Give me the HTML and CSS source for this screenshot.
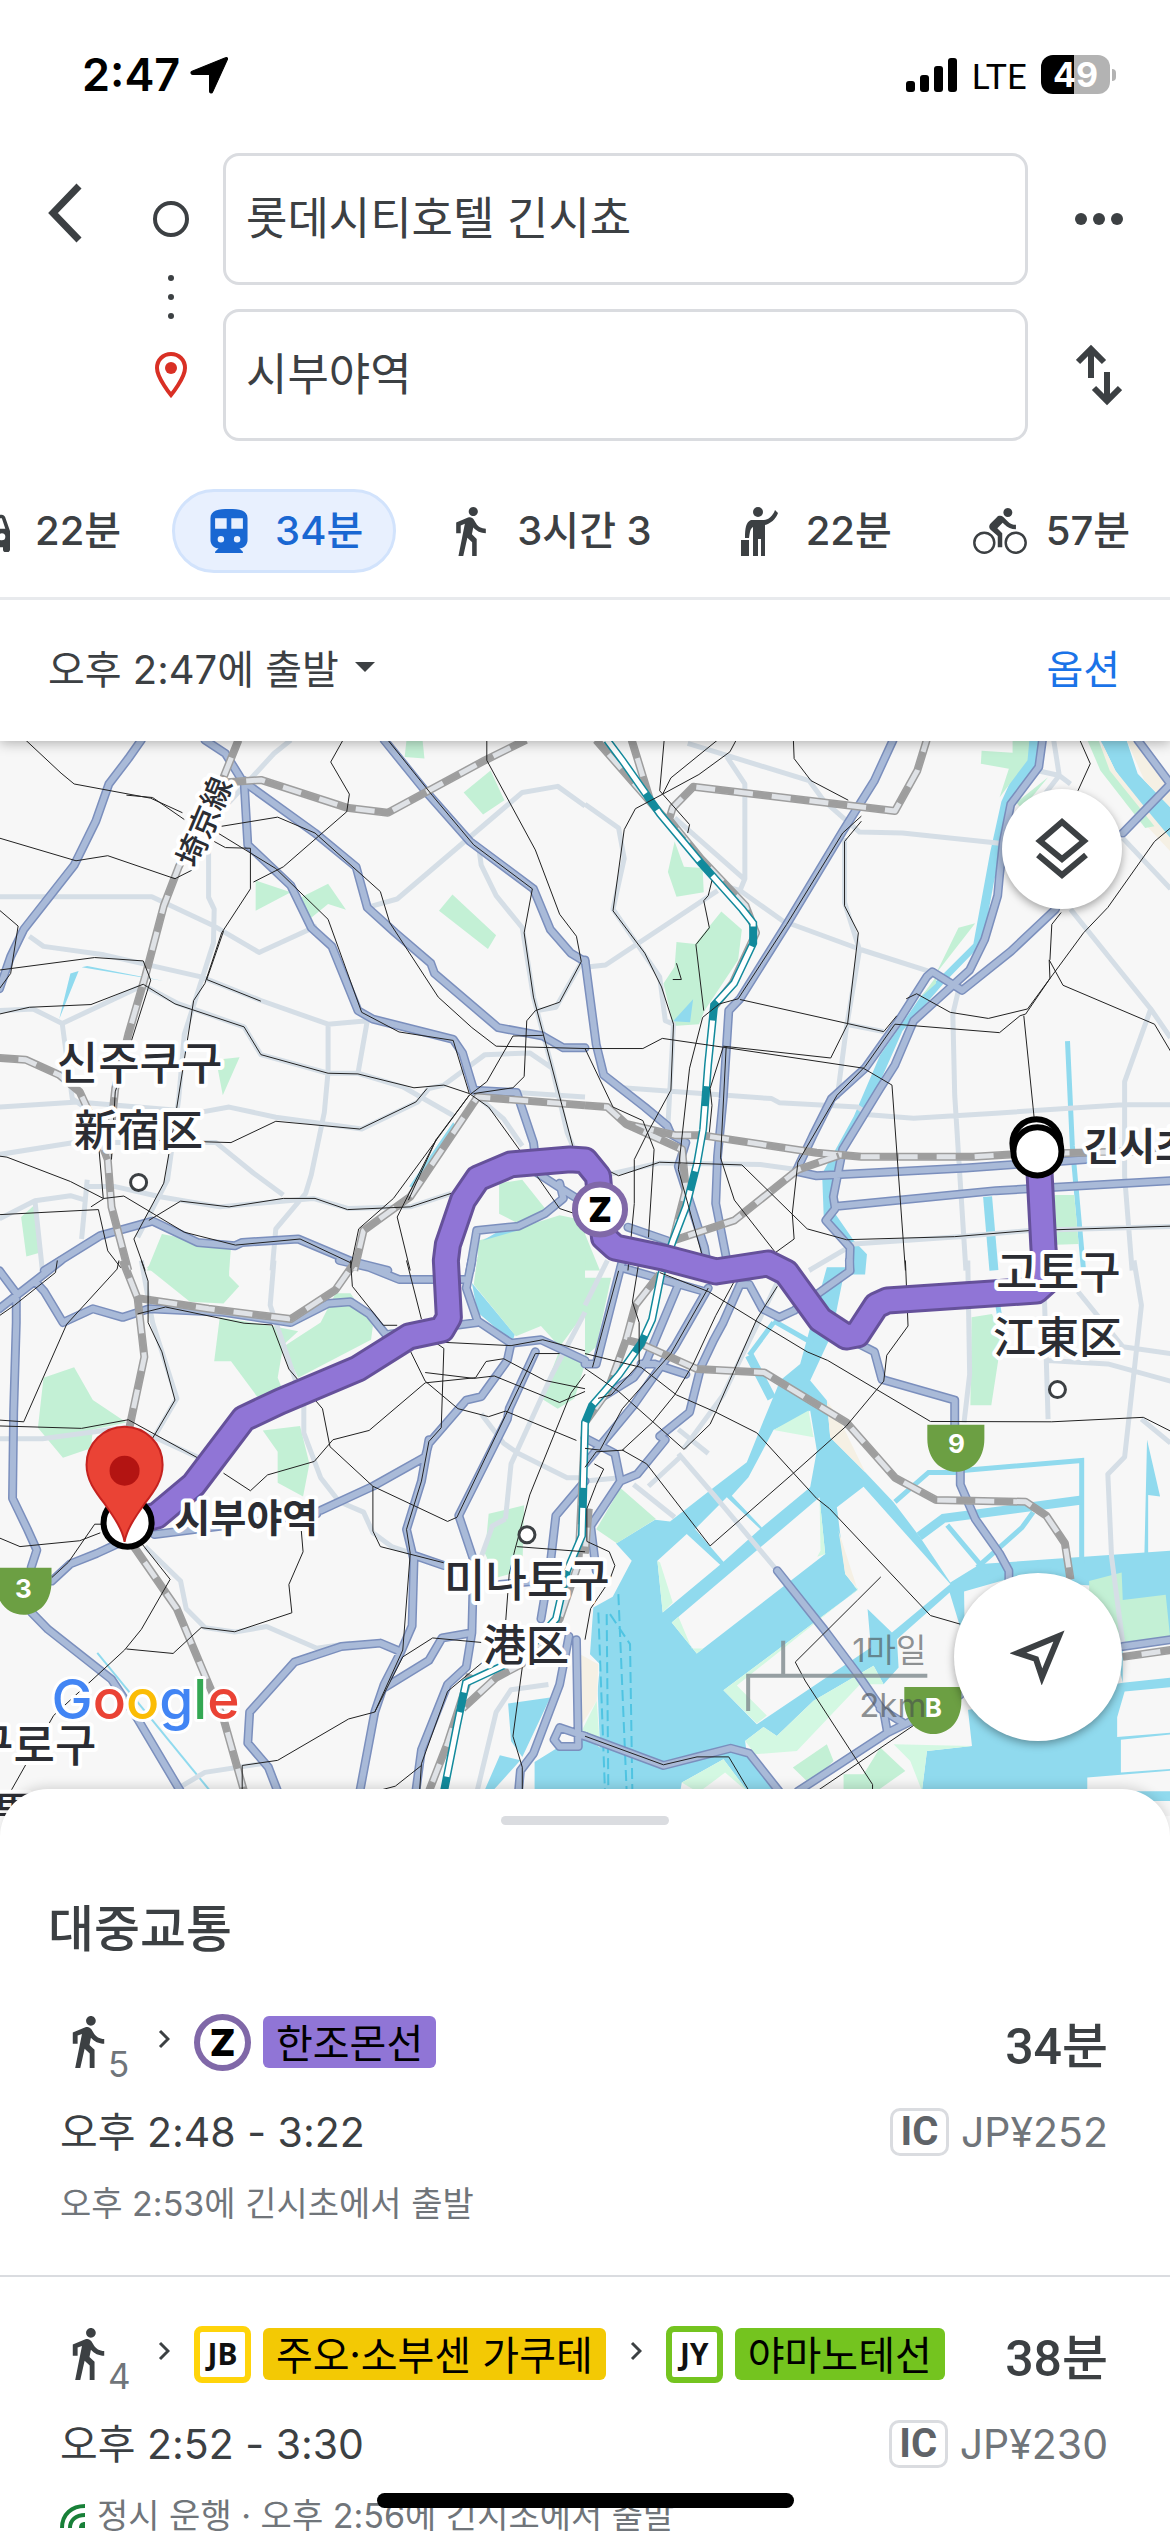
FILE: index.html
```html
<!DOCTYPE html>
<html lang="ko">
<head>
<meta charset="utf-8">
<meta name="viewport" content="width=device-width, initial-scale=1">
<title>대중교통 경로</title>
<link rel="stylesheet" href="styles.css">
</head>
<body>
<svg class="sprite" aria-hidden="true">
  <symbol id="walk" viewBox="6 1.5 13 21.5"><path d="M13.5 5.5c1.1 0 2-.9 2-2s-.9-2-2-2-2 .9-2 2 .9 2 2 2zM9.8 8.9L7 23h2.1l1.8-8 2.1 2v6h2v-7.5l-2.1-2 .6-3C14.8 12 16.8 13 19 13v-2c-1.9 0-3.5-1-4.3-2.4l-1-1.6c-.4-.6-1-1-1.7-1-.3 0-.5.1-.8.1L6 8.3V13h2V9.6l1.8-.7"/></symbol>
  <symbol id="chevron" viewBox="0 0 12 20"><path d="M2 2l8 8-8 8" fill="none" stroke="#3c4043" stroke-width="3"/></symbol>
</svg>
<div class="screen">
  <header class="top">
    <div class="status">
      <div class="status-left">
        <span class="clock">2:47</span>
        <svg width="38" height="38" viewBox="0 0 36 36"><path d="M34.500 1.500c1 0 1.300 1 .9 1.900L21.500 34c-.8 1.800-3 1.300-3-.6V17.500H2.600C.7 17.500.2 15.300 2 14.500L33 1.900z" stroke="#000" stroke-linejoin="round"/></svg>
      </div>
      <div class="status-right">
        <svg width="51" height="36" viewBox="0 0 51 36"><rect y="24" width="9" height="11" rx="3"/><rect x="14" y="18" width="9" height="17" rx="3"/><rect x="28" y="9" width="9" height="26" rx="3"/><rect x="42" y="1" width="9" height="34" rx="3"/></svg>
        <span class="carrier">LTE</span>
        <span class="battery">49</span>
      </div>
    </div>

    <form class="search">
      <button type="button" class="icon-btn back" aria-label="뒤로"><svg width="36" height="60" viewBox="0 0 36 60"><path d="M31 3L5 30l26 27" fill="none" stroke="#3c4043" stroke-width="7"/></svg></button>
      <div class="stops">
        <svg width="40" height="40" viewBox="0 0 40 40"><circle cx="20" cy="20" r="16" fill="none" stroke="#3c4043" stroke-width="4"/></svg>
        <svg width="8" height="46" viewBox="0 0 8 46" fill="#3c4043"><circle cx="4" cy="4" r="3"/><circle cx="4" cy="23" r="3"/><circle cx="4" cy="42" r="3"/></svg>
        <svg width="32" height="46" viewBox="0 0 32 46"><path d="M16 2C8 2 2 8 2 16c0 10 14 27 14 27s14-17 14-27C30 8 24 2 16 2z" fill="none" stroke="#d93025" stroke-width="4"/><circle cx="16" cy="16" r="6" fill="#d93025"/></svg>
      </div>
      <div class="fields">
        <input type="text" aria-label="출발지" value="롯데시티호텔 긴시쵸">
        <input type="text" aria-label="목적지" value="시부야역">
      </div>
      <div class="side">
        <button type="button" class="icon-btn" aria-label="더보기"><svg width="50" height="14" viewBox="0 0 50 14" fill="#3c4043"><circle cx="7" cy="7" r="6"/><circle cx="25" cy="7" r="6"/><circle cx="43" cy="7" r="6"/></svg></button>
        <button type="button" class="icon-btn" aria-label="출발지와 목적지 바꾸기"><svg width="46" height="62" viewBox="0 0 46 62" fill="none" stroke="#3c4043" stroke-width="6"><path d="M15 34V6M2 18L15 5l13 13M31 28v28M18 44l13 13 13-13"/></svg></button>
      </div>
    </form>

    <nav class="modes" aria-label="이동 수단">
      <button type="button" class="mode"><span class="mode-icon"><svg width="42" height="42" viewBox="3 4 18 16"><path d="M18.900 6c-.2-.6-.8-1-1.400-1h-11c-.7 0-1.200.4-1.400 1L3 12v8c0 .6.500 1 1 1h1c.6 0 1-.5 1-1v-1h12v1c0 .6.500 1 1 1h1c.6 0 1-.5 1-1v-8zM6.500 16a1.500 1.500 0 1 1 0-3 1.500 1.500 0 0 1 0 3zm11 0a1.500 1.500 0 1 1 0-3 1.500 1.500 0 0 1 0 3zM5 11l1.500-4.500h11L19 11z"/></svg></span>22분</button>
      <button type="button" class="mode selected" aria-pressed="true"><span class="mode-icon"><svg width="38" height="44" viewBox="4 2 16 19"><path d="M12 2c-4.400 0-8 .5-8 4v9.500C4 17.400 5.600 19 7.500 19L6 20.500v.5h12v-.5L16.500 19c1.900 0 3.500-1.600 3.500-3.500V6c0-3.500-3.600-4-8-4zM8.500 16.500a1.400 1.400 0 1 1 0-2.800 1.400 1.400 0 0 1 0 2.800zM11 10.500H6V6h5v4.500zm4.500 6a1.400 1.400 0 1 1 0-2.800 1.400 1.400 0 0 1 0 2.800zm2.500-6h-5V6h5v4.500z"/></svg></span>34분</button>
      <button type="button" class="mode"><span class="mode-icon"><svg width="30" height="49"><use href="#walk"/></svg></span>3시간 3</button>
      <button type="button" class="mode"><span class="mode-icon"><svg width="37" height="49" viewBox="0 0 37 49"><circle cx="17" cy="5" r="5"/><path d="M10 13h13c4 0 9-4 11-10l3 3c-2 6-8 11-13 12v31h-4V32h-3v17h-5V20c-3 2-3 5-4 11H4c0-10 1-16 6-18zM0 33h8v16H0z"/></svg></span>22분</button>
      <button type="button" class="mode"><span class="mode-icon"><svg width="54" height="46" viewBox="0 1.5 24 20.5"><path d="M15.500 5.500c1.100 0 2-.9 2-2s-.9-2-2-2-2 .9-2 2 .9 2 2 2zM5 12c-2.800 0-5 2.200-5 5s2.200 5 5 5 5-2.200 5-5-2.200-5-5-5zm0 8.900A3.900 3.900 0 1 1 5 13.100a3.900 3.900 0 0 1 0 7.800zm5.800-10.400l2.400-2.400.8.8c1.300 1.300 3 2.100 5.100 2.100V9c-1.500 0-2.700-.6-3.600-1.500l-1.900-1.900c-.5-.4-1-.6-1.600-.6s-1.100.2-1.400.6L7.800 8.400c-.4.4-.6.9-.6 1.400 0 .6.200 1.100.6 1.400L11 14v5h2v-6.200zM19 12c-2.800 0-5 2.200-5 5s2.200 5 5 5 5-2.200 5-5-2.200-5-5-5zm0 8.900a3.900 3.900 0 1 1 0-7.800 3.900 3.900 0 0 1 0 7.800z"/></svg></span>57분</button>
    </nav>

    <div class="depart">
      <button type="button" class="depart-time">오후 2:47에 출발<svg width="20" height="10" viewBox="0 0 20 10"><path d="M0 0h20L10 10z" fill="#3c4043"/></svg></button>
      <button type="button" class="options">옵션</button>
    </div>
  </header>

  <main class="map">
    <svg class="map-canvas" viewBox="0 0 1170 1074" preserveAspectRatio="xMidYMin slice" role="img" aria-label="지도">
      <defs>
        <g id="light">
          <g transform="translate(0 -1) scale(.3731 .338)"><path d="M780 0L735 40L610 190M560 310V465L575 500L573 600L495 870L480 1060L450 1300L370 1470M0 463H408L575 550L695 628L850 550M985 495L1065 470L1400 155L1495 137L1568 195M80 580L118 610L280 635L540 700L700 770L880 840L985 830L960 985M880 840V980L870 1100L835 1285L820 1340L740 1445L730 1568M0 800L90 795L168 838L385 725L480 780L655 848L700 930L880 985H960L1080 1025L1215 1110M168 838L195 1060L240 1095M0 1085L210 1070L540 1100L615 1085L740 1115L970 1150L1120 1070L1150 1030L1190 1020L1300 930L1420 925L1480 970M0 1225L200 1190H580L680 1280L760 1345M230 1320H310L430 1350L590 1380L840 1355L935 1385L1100 1380L1210 1340M0 1415L95 1362L190 1347L230 1360M95 1362L115 1568M235 1300L220 1475M1285 330L1290 370L1330 460L1400 555L1430 760L1480 970L1520 1160L1535 1200M1440 800L1490 790L1560 655M1270 1045L1350 1120L1400 1200M1385 1042L1568 1055"/></g>
          <g transform="translate(585 -1) scale(.3731 .338)"><path d="M275 10L600 120L640 180L735 272L850 275L1110 305M380 50L428 130V410L415 445L385 435M240 230L425 410M0 190L90 260L105 350L75 500L200 700L215 830L237 840L222 1140M415 445L530 535L740 620L920 683M0 672L55 665L355 445M695 290V480L735 620L700 850L675 1060M700 840L800 862M1000 740L985 810L990 1050L1020 1568M100 1028L500 1060L520 1072L730 1085L760 1108L880 1118L1100 1103L1440 1078H1568M1300 500L1515 795L1445 1010V1290L1465 1568M1210 90L1270 105L1300 130M1255 0L1270 105L1210 190M1440 290L1568 440M1515 795L1568 880M60 1285L200 1250L470 1255L600 1275M600 1568L720 1490L1000 1468L1190 1450L1568 1438"/></g>
          <g transform="translate(0 519) scale(.3731 .3444)"><path d="M0 517H115L335 485L430 520L540 575M380 0L410 180L475 400L410 520M735 0L725 130L815 420V500L860 630L910 700L975 730L1000 790L1050 830L1190 880M390 830L485 930L500 1010L550 1065L630 1078L715 1062L850 1125L940 1110M1568 150L1480 330L1370 590L1355 750M1290 445L1350 530L1390 560L1520 630H1568M1355 750L1320 770L1290 860M1470 1230L1370 1245L1330 1310L1280 1535M480 1530L550 1485L700 1460"/></g>
          <g transform="translate(585 519) scale(.3731 .3444)"><path d="M515 900L345 680L250 560M250 490L330 560M0 640L95 630M130 650L240 745M170 655L260 565M60 0L0 130M530 30L370 390L265 545M1025 0L1030 330L1015 470M1230 100L1240 460M1470 0L1490 130L1445 570L1400 620L1410 860L1440 1110M1320 90L1440 250L1568 270M1240 290L1400 300L1568 350M1490 460L1568 530"/></g>
        </g>
        <g id="highways">
          <g transform="translate(0 -1) scale(.3731 .338)"><path d="M380 0L345 55L293 130L258 240L200 370L65 560L30 640L0 735M550 0L605 40L650 120L845 275L955 375L985 495L1060 570L1155 660L1165 690L1335 850L1455 875L1510 910H1568M655 120L665 310L780 430L835 555L890 610L960 800L1000 825L1215 885L1240 925L1270 1035L1385 1042L1430 1190L1440 1280L1510 1330L1568 1370M1030 0L1140 150L1260 300L1430 440L1475 560L1530 630L1568 655M120 1568L270 1465L410 1422L530 1485L630 1495L650 1485L800 1475L940 1540L1040 1568M1260 1568L1278 1450L1390 1437L1460 1400L1510 1355L1500 1310"/></g>
          <g transform="translate(585 -1) scale(.3731 .338)"><path d="M825 0L775 120L690 270L540 545L415 765L385 800L370 1060L355 1230L350 1370L385 1568M1225 0L1215 80L1140 190L1120 300L1110 400L1105 460L1070 590L1030 680L940 770L880 830L830 960L790 1030L690 1210L665 1350L670 1385L645 1420L710 1500L708 1568M1260 500L1140 625L1010 740L930 685L915 700L840 830L750 970L660 1060L610 1170L565 1275L620 1288L1020 1265L1340 1240M675 1378L1100 1332L1568 1303M0 650L30 900L50 990L160 1085L220 1140L230 1165L270 1190L250 1260L320 1500L330 1568M1480 0L1568 130L1440 275M115 1440L220 1480"/></g>
          <g transform="translate(0 519) scale(.3731 .3444)"><path d="M0 30L45 95V180L38 440L35 690L75 780L100 840L85 890M85 1020L130 1070L300 1215L370 1330L485 1540M0 140L95 60L165 0M95 60L120 90L170 180L250 140L330 165L400 140L600 150L780 180L880 125L940 120L990 155L1035 215L1280 180M910 0L990 20L1070 55H1250M1265 0L1250 80L1280 175L1370 240L1450 230L1568 290M1370 240L1360 290L1290 395L1250 405L1150 530L1140 570L1000 655L860 725M1150 520L1130 640L1090 780L1110 870L1105 1060L1075 1135L1020 1110L915 1120L790 1165L670 1310L665 1400L720 1470L745 1540M1075 1135L1030 1230L1005 1310L965 1540M1435 265L1365 430L1360 460L1230 740L1270 870L1265 1080L1185 1095L1150 1160L1030 1240M1265 1080L1250 1180L1200 1230L1130 1420L1115 1540M1110 855L1190 885M1340 940L1440 930M415 795L850 735M140 930L190 880L260 850L320 820M1568 640L1490 740L1475 880L1450 1040M1525 1090L1500 1230L1430 1430L1395 1480L1390 1540M1545 1100L1550 1410H1500L1485 1390L1500 1355L1568 1380"/></g>
          <g transform="translate(585 519) scale(.3731 .3444)"><path d="M100 0L30 300L0 300M95 20L320 90M250 70L165 290L130 340L40 400M330 80L240 250L130 420L0 590M440 70H415L370 180L345 230L310 310L280 440L200 510L215 520L140 620L95 640L15 770L30 900M0 515L80 560L95 640M440 70L475 140L520 165L560 145L710 30L708 0M150 300H185L270 330M730 240L775 265L795 345L990 405V480M1005 605V650L1045 750L1110 850L1135 900V925M515 900L640 1070L730 1200L800 1310L810 1370L570 1540M1005 1260L885 1330L810 1370M790 1300L850 1340M0 1380L210 1465L300 1440L390 1415L440 1430L520 1540M1440 1120L1568 1100"/></g>
        </g>
        <g id="rails">
          <g transform="translate(0 -1) scale(.3731 .338)"><path d="M640 0L600 110L540 240L480 375L440 490L390 700L345 870L310 1030L290 1240L300 1380L345 1568M610 125L700 118L930 200L1040 215L1300 60L1410 0M0 940L70 945L160 990L215 1040L240 1100L290 1240M1568 1080L1280 1055L1100 1350L975 1450L950 1568"/></g>
          <g transform="translate(585 -1) scale(.3731 .338)"><path d="M30 0L200 215L310 350L430 490L458 570L395 720L345 790M125 0L175 180M310 350L225 235L235 200L290 138L830 210L890 90L915 0M0 1080L60 1085L110 1135L240 1168H310L620 1220L740 1232H1040L1140 1225L1568 1213M110 1135L260 1210L270 1330L235 1480L400 1420L570 1270L680 1228"/></g>
          <g transform="translate(0 519) scale(.3731 .3444)"><path d="M330 0L370 110L388 280L345 500M375 110L560 140L780 170L900 85L955 0M360 830L475 1010L545 1190L600 1330L655 1540M1568 490L1550 880L1500 1040L1400 1170L1330 1210L1240 1300M1260 1200L1200 1400L1150 1540"/></g>
          <g transform="translate(585 519) scale(.3731 .3444)"><path d="M200 40L135 130L110 230L145 240L300 315L480 325L700 470L830 630L940 695L1180 700L1235 740L1285 820L1300 925M110 230L60 380L0 470M1440 1150L1568 1130M10 720L0 850"/></g>
        </g>
        <path id="shinkansen" d="M607 -1L622 19L660 73L701 122L742 168L753 182V202L734 242L714 264L708 323L703 388L697 422L686 465L673 499L661 533L652 578L641 602L619 633L592 664L585 681L582 794L567 829L556 877L522 915L466 941L457 984L444 1050"/>
        <path id="route" d="M128 781L157 774L194 743L244 677L280 660L358 627L409 595L442 588L449 576L446 519L448 503L463 459L478 437L511 423L570 418L585 419L598 435L601 468L604 496L615 506L663 516L716 530L768 522L786 531L820 578L846 595L857 593L876 564L887 559L1036 549L1046 540L1043 506L1038 410"/>
      </defs>

      <rect width="1170" height="1074" class="land"/>
      <g class="water">
        <g transform="translate(0 -1) scale(.3731 .338)"><path d="M190 690l22-7-52 142zM220 672l15-4 205 44zM1097 1320l118-190 10 15-105 180z"/></g>
        <g transform="translate(585 -1) scale(.3731 .338)"><path d="M1190 0h25l-10 80-65 110-20 110-25 120-30 180-105 120-110 140-60 150-90 180-20 70-10 140 50 80 35 40-5 60h-50l15-68-75-80-5-150 85-170 70-180 110-175 140-155 45-270 30-150zM1380 0h70l30 100 88 100v110l-68-90-80-130z"/><path class="canal" d="M1292 890l13 310 30 368"/><path class="canal wide" d="M1078 1350l17 218"/></g>
        <g transform="translate(580 659) scale(.3333)"><path d="M40 620L98 588L155 480L108 428L225 357L270 362L395 265L500 185L550 60L600 -60L660 -110L740 -400H795L755 -200L690 -60L740 0L750 110L855 215L940 305L1020 410L1110 545L1200 490L1770 450V1200H0V1000L50 900L60 790L30 760z"/></g>
        <g transform="translate(0 519) scale(.3731 .3444)"><path d="M1265 65l115 150-5 15-25-15-70-65zM1362 1285l113-17-75 172-30-45zM1433 1540v-85l67-45 68 10v120zM1340 1435l55 15-75 90h-22z"/><path class="thin" d="M262 1138L565 1540"/></g>
        <g transform="translate(585 519) scale(.3731 .3444)"><path class="canal" d="M980 612L1330 580V880M830 700L920 615H1000M1050 890L1170 775L1200 730M970 768L1080 910M505 175L610 240M440 275L505 180M1095 60L1110 160"/><path class="canal wide" d="M895 800L960 748L1330 695M440 275L500 400"/><path d="M1505 520l35 165-32-5v170h-10z"/></g>
      </g>
      <g class="land">
        <g transform="translate(580 659) scale(.3333)"><path d="M580 88l60-28 50-30 20 120-20 110-145 120-90-95 50-55zM345 385l95-95 100 95-110 98-85-98zM232 480l88-80 100 92-172 143zM275 665l443-375 17 170-385 298zM770 320l80-62 260 292-175 145-73-70 10 115-342 230-100-102 402-300-37-48zM495 1020l55-42 40 27 110-105 180-105 30 55 45-50-5-85 158-140 32 105 20 220 15 135-135 15-15 120H590l-90-110zM0 760l50 35 10 245-60-40zM305 1145l125-70 75 100H300z"/></g>
        <g transform="translate(585 519) scale(.3731 .3444)"><path d="M1015 960l115-35 250 20 60 280-420 80zM1440 1120l128-20v110l-128 15zM1445 1250l123-12v132l-143 12v-57zM1435 1390l133-15v100l-133 10zM1345 1500l223-20v60h-223z"/></g>
      </g>
      <g class="beige">
        <g transform="translate(585 -1) scale(.3731 .338)"><path d="M1385 10l35 80 80 110 68 90v40l-118-140-70-120zM1450 0h30l88 130v70l-70-80z"/></g>
        <g transform="translate(580 659) scale(.3333)"><path d="M740 0l40 60 75 155-105-105zM775 390l55 170-35-40zM0 760l55 30-5 110-50 80z"/></g>
      </g>
      <g class="park-light">
        <g transform="translate(580 659) scale(.3333)"><path d="M580 88l105-58 15 80zM232 480l8 5 38 120-30 30zM275 665l20-17 40 95 35 0-20 15zM718 290l3 160-10 18 24-8zM430 868l402-300-12-14 14 10-364 290 60 60 30 30-30 24zM495 1020l55-42 40 27 110-105 180-105 30 55h-70l-190 200-125 10zM940 1030l235 5-135 15-15 120-35-90zM305 1145l125-70 75 100-70-60-80 60zM50 900l10 140-60-40z"/></g>
      </g>
      <g class="park">
        <g transform="translate(0 -1) scale(.3731 .338)"><path d="M1090 0h43l5 55-53-5zM1243 155l72-65 37 88-57 42zM686 415l94 35-94 55zM808 465l72-40 48 77-48-17-50 45zM1213 457l117 120-22 41-131-113zM580 945l63-7-45 112zM58 1410l35-35 17 140-38 12zM435 1460l185 40-5 68H395zM1338 1310l62-10 65 90-75 40-52-30zM1282 1480l218-75 68 15v148h-288z"/></g>
        <g transform="translate(585 -1) scale(.3731 .338)"><path d="M1145 0h45l-5 60-75 110 25-85-75-15 2-38 83 6zM1155 185l85-75-70 95zM240 300l25 75 50 3 3 72-73 13-23-73zM365 507l55 53-10 90-90 150-15 40-68 5-27-125 30-50 5-73 50 6zM1000 555l45-13-105 148zM900 760l40-60v20zM1345 0h30l30 90 120 165-25 5-120-170zM1258 1345h52l12 145-60 2zM0 1460l40 108H0z"/></g>
        <g transform="translate(0 519) scale(.3731 .3444)"><path d="M395 20l35-30h185v55l27 30-42 50-90-5zM590 165l140 25 70 15-40 40-15 95 15 40-70 15-70-103h-45zM860 180l40-85h40l60 95-5 40-195 110-40-90zM118 340l82-30 50 95 90 65-90 20-5 55-75 27-67-87zM705 493l100-13 25 110-17 95-68-40v-90zM1280-10h288v160l-68 100-50-60-67 30-113-150zM1500 260l68 40-28 100-45 30-45-30zM1310 735l95-25-5 190-70 20-30-70z"/></g>
        <g transform="translate(585 519) scale(.3731 .3444)"><path d="M1035 165l55-10 25 75-27 190h-56zM30 780l65-120 95 90-105 70zM0 50h70L30 250 0 280zM1350 930l87-25 3 80 115-15 13 135-128 5-90-40z"/></g>
        <g transform="translate(580 659) scale(.3333)"><path d="M638 1100l102-70 20 50-70 70zM900 1040l75 70-85 60-100 0 0-50 60 0z"/></g>
      </g>
      <g class="water"><path d="M673 280l20-22-3 23zM483 499l17-10h18z"/></g>
      <g class="ferry" transform="translate(580 659) scale(.3333)"><path d="M55 635l20 540M80 640l5 535M115 580l25 595M90 640l60 90 7 445"/></g>

      <use href="#light" class="light"/>
      <use href="#highways" class="highway-edge"/>
      <use href="#highways" class="highway"/>
      <use href="#rails" class="rail-edge"/>
      <use href="#rails" class="rail"/>
      <use href="#rails" class="rail-dash"/>
      <use href="#shinkansen" class="bullet-edge"/>
      <use href="#shinkansen" class="bullet-dash"/>
      <g class="metro">
        <g transform="translate(0 -1) scale(.3731 .338)"><path d="M70 0L165 98L200 130L405 172L490 215M340 163L410 170L495 235M0 290L205 357L290 342L470 410L515 385M595 255L745 228L845 275L1020 448L1045 540L1175 760L1265 850L1330 905L1568 912M585 275L740 380L880 530L970 805L1070 863L1215 888L1258 1045M575 300L605 318L672 320V440L595 570L550 720L520 770L470 1120L440 1310L360 1475L390 1568M680 420L760 375L930 212L937 160L887 65L920 0M0 503L50 550L30 690L0 735M0 680L255 643L385 653L405 710L310 1040L300 1240M0 810L80 790L245 782L385 722L470 780L655 848L700 930L880 985L960 987L1110 1028L1190 1020L1258 1045M600 565L555 708L700 772M410 1183L620 1190L740 1127L965 1150L1115 1070L1145 1030M1258 1050L1055 1355L962 1445L940 1560M1258 1050L1170 1180L1095 1360M1170 1180L1065 1410L1100 1568M0 1230L20 1233L190 1305L278 1355L265 1190M0 1403L265 1388L290 1510L325 1560M245 1380L280 1355L333 1348L495 1455L632 1493L805 1475L940 1545M400 1420L485 1363L615 1380L760 1355H845L932 1388L1100 1380L1210 1340M1305 0V60L1435 325L1500 515L1545 580L1558 655L1500 775L1435 800L1412 830L1405 995L1375 1028L1270 1045M1040 0L1160 165L1270 310L1427 440L1405 570L1430 760L1535 1200M1258 1050L1305 1010L1375 875L1455 873M1258 1045L1310 1085L1395 1215M1440 1290L1500 1385L1568 1410"/></g>
        <g transform="translate(585 -1) scale(.3731 .338)"><path d="M212 0L200 150L280 250L275 275M355 0L230 112L208 160L135 203L105 265L75 505L160 630L205 730L237 840L230 1035L168 1160L132 1240V1370L115 1568M405 0L388 35L305 102L208 160M558 0L560 55L605 120L705 178M340 415L330 460L318 475L333 555L297 605L318 800M740 240L695 300V490L732 570L703 840L658 940L370 905M740 225L690 275L540 545L410 765L360 780L315 820L280 970L250 1270L325 1568M415 767L800 862L835 815M245 660L258 708H235M0 912H155L207 882L370 908L745 970L822 1020L858 1568M370 908L335 1030L340 1080L333 1160M378 908L363 1235L400 1360L510 1515L560 1475L555 1400L570 1248L675 1050L750 965L830 840L1110 865L1165 815L1180 810L1245 705L1243 650L1280 725L1525 840L1568 920M860 765L888 750L978 805L1080 823L1185 795L1335 570L1400 495L1525 300L1568 260M1175 815L1203 1120M1245 650L1250 545L1275 510M1325 0L1353 70L1320 150M0 912L75 1085L155 1125L185 1210L170 1470M0 1240L90 1288L200 1248L420 1256L595 1445L700 1477L990 1468L1190 1450L1568 1437"/></g>
        <g transform="translate(0 519) scale(.3731 .3444)"><path d="M0 160L40 130L150 35L155 0M320 0L315 25L180 185L65 468L0 463M0 480L220 487L345 462L560 590M600 617L672 668L718 622L843 583L893 520L990 493L1140 355L1275 340L1303 293L1350 285L1460 348L1568 372M380 0L398 60V180L435 265L470 405L405 525M370 155L445 135L655 182L730 187L775 315L865 430L885 540L1000 655V785L1020 830L1190 877M940 0L945 75L1028 188H1065M1090 0L1130 170M1180 237L1370 247L1455 230L1568 262M1100 262L1140 350L1228 430L1310 453L1355 437L1545 522M1170 240L1190 255L1183 485L1150 525L1130 640L1090 780L1100 850L1080 1130L1005 1310M1568 330L1530 385L1420 680L1380 840L1365 910L1355 1055M1140 325L1270 342L1325 335L1500 412L1568 380M1000 655L1200 757L1225 745L1355 450L1435 270H1500M380 820L457 925L380 1070L335 1130L145 1320L30 1540M340 1127L465 1140L540 1065L630 1077L783 1022L775 940L813 845L808 780M0 805L55 830L215 813L270 790M140 920L185 875L255 765H275M1025 1535L1060 1525L1130 1465M650 1540V1465L745 1450L935 1330L1005 1310L1080 1150L1160 1095L1290 1108M1385 830L1568 845M1125 1540L1130 1460L1200 1250L1300 1160M1400 1180L1375 1380L1400 1470V1540"/></g>
        <g transform="translate(585 519) scale(.3731 .3444)"><path d="M145 0L127 120L145 180V300L70 390L35 400M200 35L330 90L450 170L595 265L650 290L925 467L1250 468L1495 455L1568 495M0 270L150 310L245 390L350 440L460 500L620 690L655 720L925 1030L1005 1055M0 313L90 380L265 548L335 475L350 440L460 170L515 75M400 60L350 160L290 300L240 390L180 470L100 550L165 590L335 828L555 620L700 480L800 350L808 275L865 190L858 0M0 545L40 550M105 550L30 555L0 600M330 80L230 270L100 430L40 550M90 30L20 310M792 918L730 985L563 1165L590 1220L770 1520V1540M0 1380L210 1463L300 1440H385L440 1540M885 1345L620 1540M25 590L50 605L30 650L5 720V815L65 845L80 885L65 930L15 1010L0 1100"/></g>
      </g>

      <use href="#route" class="route-edge"/>
      <use href="#route" class="route-fill"/>

      <g class="shields">
        <path d="M-4 826h56v14c0 21-13 33-28 33s-28-12-28-33zM927 683h57v14c0 21-13 33-28 33s-29-12-29-33z"/>
        <text x="24" y="856">3</text><text x="956" y="711">9</text>
      </g>
      <g class="stations">
        <circle cx="1036" cy="402" r="24"/><circle cx="1037" cy="410" r="24"/><circle cx="128" cy="781" r="24"/>
        <circle class="line-z" cx="600" cy="468" r="25"/>
        <text x="600" y="481">Z</text>
      </g>

      <g class="label">
        <text transform="translate(205 81) rotate(-67)" class="line-name" y="11">埼京線</text>
        <text x="140" y="339" class="hangul">신주쿠구</text><text x="139" y="405">新宿区</text>
        <text x="1058" y="547" class="hangul">고토구</text><text x="1057" y="611">江東区</text>
        <text x="527" y="855" class="hangul">미나토구</text><text x="526" y="919">港区</text>
        <text x="14" y="1020" class="hangul">메구로구</text><text x="14" y="1087">目黒区</text>
        <text x="1083" y="419" class="station-name">긴시초</text>
        <text x="175" y="790" class="station-name">시부야역</text>
      </g>
      <g class="town"><circle cx="139" cy="441" r="8"/><circle cx="1057" cy="648" r="8"/><circle cx="527" cy="793" r="8"/></g>
      <path class="pin" d="M125 800c-2-12-10-24-20-38-10-13-18-24-18-39a38 38 0 0 1 76 0c0 15-8 26-18 39-10 14-18 26-20 38z"/>
      <circle cx="125" cy="729" r="15" fill="#b31412"/>

      <g class="scale">
        <path d="M748 969V934H927M783 934V899"/>
        <text x="926" y="920">1마일</text>
      </g>
      <g class="shields"><path d="M904 945h57v14c0 21-13 33-28 33s-29-12-29-33z"/><text x="933" y="975">B</text></g>
      <g class="scale"><text x="926" y="975">2km</text></g>
      <text class="logo" x="52" y="977"><tspan fill="#4285f4">G</tspan><tspan fill="#ea4335">o</tspan><tspan fill="#fbbc05">o</tspan><tspan fill="#4285f4">g</tspan><tspan fill="#34a853">l</tspan><tspan fill="#ea4335">e</tspan></text>
    </svg>
    <button type="button" class="fab layers" aria-label="지도 유형"><svg width="54" height="64" viewBox="0 0 54 64" fill="none" stroke="#3c4043" stroke-width="6"><path d="M27 5L5 24l22 18 22-18zM3 38l24 20 24-20"/></svg></button>
    <button type="button" class="fab locate" aria-label="내 위치"><svg width="56" height="56" viewBox="0 0 56 56"><path d="M49 7L8 24l18 6 6 18z" fill="none" stroke="#3c4043" stroke-width="6"/></svg></button>
  </main>

  <section class="sheet">
    <div class="handle"></div>
    <h1>대중교통</h1>
    <ul class="trips">
      <li class="trip">
        <div class="line legs">
          <span class="walk"><svg width="33" height="52"><use href="#walk"/></svg><span class="walk-min">5</span></span>
          <svg class="next" width="12" height="20"><use href="#chevron"/></svg>
          <span class="badge round">Z</span>
          <span class="route-name purple">한조몬선</span>
          <strong class="total">34분</strong>
        </div>
        <div class="line when"><span>오후 2:48 - 3:22</span><span class="fare"><span class="ic">IC</span>JP¥252</span></div>
        <div class="line note">오후 2:53에 긴시초에서 출발</div>
      </li>
      <li class="trip">
        <div class="line legs">
          <span class="walk"><svg width="33" height="52"><use href="#walk"/></svg><span class="walk-min">4</span></span>
          <svg class="next" width="12" height="20"><use href="#chevron"/></svg>
          <span class="badge yellow">JB</span>
          <span class="route-name gold">주오·소부센 가쿠테</span>
          <svg class="next between" width="12" height="20"><use href="#chevron"/></svg>
          <span class="badge green">JY</span>
          <span class="route-name lime">야마노테선</span>
          <strong class="total">38분</strong>
        </div>
        <div class="line when"><span>오후 2:52 - 3:30</span><span class="fare"><span class="ic">IC</span>JP¥230</span></div>
        <div class="line note"><svg width="25" height="24" viewBox="0 0 25 24" fill="none" stroke="#188038" stroke-width="4"><path d="M2 24C2 10 12 2 25 2M10 24c0-8 6-13 15-13"/><path d="M25 18v6h-6c0-4 2-6 6-6z" fill="#188038" stroke="none"/></svg>정시 운행 · 오후 2:56에 긴시초에서 출발</div>
      </li>
    </ul>
  </section>
  <div class="home-bar"></div>
</div>
</body>
</html>
```
FILE: styles.css
```css
* { box-sizing: border-box; }
body {
  margin: 0;
  background: #fff;
  color: #3c4043;
  font-family: Inter, "Noto Sans CJK KR", sans-serif;
  font-size: 40px;
}
button, input { font: inherit; color: inherit; margin: 0; }
button { background: none; border: 0; padding: 0; }
svg { display: block; flex: none; }
.sprite { position: absolute; width: 0; height: 0; }
.screen { height: 100vh; display: flex; flex-direction: column; overflow: hidden; }

/* status bar */
.top { flex: none; position: relative; z-index: 1; background: #fff; box-shadow: 0 2px 12px rgba(0, 0, 0, .3); }
.status { display: flex; justify-content: space-between; align-items: center; height: 153px; padding: 0 54px 4px 82px; color: #000; }
.status-left, .status-right { display: flex; align-items: center; }
.status-left { gap: 10px; }
.status-right { gap: 14px; }
.clock { font-size: 45px; font-weight: 600; line-height: 56px; }
.carrier { font-family: Lato, sans-serif; font-size: 35px; }
.battery {
  width: 69px; height: 39px; margin-right: 6px; border-radius: 12px;
  background: linear-gradient(90deg, #000 48%, #b3b3b3 48%);
  color: #fff; font-size: 34px; font-weight: 700; line-height: 39px; text-align: center;
}
.status-right::after { content: ""; width: 4px; height: 12px; margin-left: -18px; border-radius: 0 4px 4px 0; background: #b3b3b3; }

/* origin and destination */
.search { display: grid; grid-template-columns: 135px 72px 1fr 142px; height: 288px; }
.icon-btn { display: flex; align-items: center; justify-content: center; }
.back { height: 120px; justify-content: flex-start; padding-left: 48px; }
.stops, .side { display: grid; grid-template-rows: 132px 24px 132px; place-items: center; }
.side { grid-template-rows: 132px 132px; row-gap: 24px; }
.fields { display: grid; gap: 24px; padding-left: 16px; }
.fields input {
  width: 100%; height: 132px; padding: 0 20px 8px;
  border: 3px solid #dadce0; border-radius: 16px; background: #fff;
  font-size: 45px; outline: 0;
}

/* travel modes */
.modes { display: flex; gap: 18px; margin-left: -68px; padding: 48px 0 24px; border-bottom: 3px solid #e8eaed; overflow: hidden; }
.mode {
  flex: none; display: flex; align-items: center; gap: 16px; height: 84px;
  padding: 0 30px 0 24px; border: 3px solid transparent; border-radius: 42px;
  font-weight: 500; white-space: nowrap; line-height: 60px;
}
.mode-icon { width: 60px; display: flex; justify-content: center; fill: currentColor; }
.selected { background: #e8f0fe; border-color: #d2e3fc; color: #1967d2; }

.depart { display: flex; justify-content: space-between; align-items: center; height: 141px; padding: 0 50px 8px 48px; }
.depart-time { display: flex; align-items: center; gap: 16px; }
.options { color: #1a73e8; }

/* map */
.map { flex: 1; min-height: 0; position: relative; overflow: hidden; background: #f7f7f7; }
.map-canvas { width: 100%; height: 100%; }
.map-canvas path { vector-effect: non-scaling-stroke; }
.land { fill: #f7f7f7; }
.water { fill: #90daee; }
.beige { fill: #f5f0e4; }
.park { fill: #c3f0d5; }
.park-light { fill: #d3f8e2; }
.canal, .thin { fill: none; stroke: #90daee; stroke-width: 5px; }
.canal.wide { stroke-width: 9px; }
.thin { stroke-width: 2px; }
.ferry { fill: none; stroke: #4fc4e2; stroke-width: 2px; stroke-dasharray: 11 5; }
.light { fill: none; stroke: #d5dee6; stroke-width: 5px; stroke-linejoin: round; }
.highway-edge, .highway { fill: none; stroke-linejoin: round; stroke-linecap: round; }
.highway-edge { stroke: #7b8fbd; stroke-width: 9px; }
.highway { stroke: #a9bad8; stroke-width: 6px; }
.rail-edge, .rail, .rail-dash { fill: none; stroke-linejoin: round; }
.rail-edge { stroke: #9e9e9e; stroke-width: 8px; }
.rail { stroke: #dfe2e6; stroke-width: 5px; }
.rail-dash { stroke: #9e9e9e; stroke-width: 6px; stroke-dasharray: 19 19; }
.bullet-edge, .bullet-dash { fill: none; stroke: #128a9c; stroke-width: 8px; }
.bullet-dash { stroke: #fff; stroke-width: 5px; stroke-dasharray: 66 20; }
.metro { fill: none; stroke: #222; stroke-width: 1px; }
.route-edge, .route-fill { fill: none; stroke-linejoin: round; }
.route-edge { stroke: #65519a; stroke-width: 28px; }
.route-fill { stroke: #9075d6; stroke-width: 22px; }
.shields { fill: #6c9f43; }
.shields text { fill: #fff; font: 700 26px Inter, sans-serif; text-anchor: middle; }
.stations circle { fill: #fff; stroke: #000; stroke-width: 6px; }
.stations .line-z { stroke: #8068a8; }
.stations text { font: 900 34px Inter, sans-serif; text-anchor: middle; }
.label text {
  fill: #2b2d33; stroke: #fff; stroke-width: 8px; stroke-linejoin: round; paint-order: stroke;
  font: 500 43px "Noto Sans CJK KR", sans-serif; text-anchor: middle;
}
.label .hangul { font-size: 45px; }
.label .line-name { font-size: 31px; }
.label .station-name { font-size: 39px; font-weight: 700; text-anchor: start; }
.town { fill: #fff; stroke: #3c4043; stroke-width: 3px; }
.pin { fill: #ea4335; stroke: #c5221f; stroke-width: 2px; }
.scale path { fill: none; stroke: #7f8a8e; stroke-width: 4px; opacity: .8; }
.scale text { fill: rgba(70, 75, 78, .6); font: 400 33px Inter, "Noto Sans CJK KR", sans-serif; text-anchor: end; }
.logo { font: 500 55px Inter, sans-serif; stroke: #fff; stroke-width: 6px; stroke-linejoin: round; paint-order: stroke; }

.fab { position: absolute; display: flex; align-items: center; justify-content: center; border-radius: 50%; background: #fff; box-shadow: 0 3px 8px rgba(0, 0, 0, .35); }
.layers { top: 48px; right: 48px; width: 120px; height: 120px; }
.locate { bottom: 75px; right: 48px; width: 168px; height: 168px; }

/* bottom sheet */
.sheet { flex: none; position: relative; height: 743px; margin-top: -27px; background: #fff; border-radius: 48px 48px 0 0; box-shadow: 0 -2px 12px rgba(0, 0, 0, .15); overflow: hidden; }
.handle { width: 168px; height: 9px; margin: 27px auto 0; border-radius: 5px; background: #dadce0; }
h1 { margin: 74px 48px 6px; font-size: 50px; font-weight: 500; line-height: 60px; }
.trips { margin: 0; padding: 0; list-style: none; }
.trip { padding: 48px 62px 51px 60px; border-bottom: 2px solid #dadce0; }
.line { display: flex; align-items: center; white-space: nowrap; }
.legs { height: 58px; gap: 12px; }
.walk { display: flex; align-items: center; gap: 3px; width: 86px; padding-left: 12px; fill: #3c4043; }
.walk-min { padding-top: 44px; color: #70757a; font-size: 35px; line-height: 34px; }
.next { margin: 0 12px 6px 0; }
.between { margin-left: 12px; }
.badge {
  flex: none; width: 57px; height: 57px; border: 6px solid; border-radius: 8px; background: #fff;
  font: 700 30px/44px "Noto Sans", sans-serif; text-align: center;
}
.round { border-radius: 50%; font: 900 37px/45px Inter, sans-serif; }
.badge.round { border-color: #8068a8; color: #000; }
.yellow, .green { color: #111; }
.badge.yellow { border-color: #ffd40a; }
.badge.green { border-color: #74c41f; }
.route-name { height: 52px; padding: 0 13px; border-radius: 6px; color: #000; font-family: "Noto Sans CJK KR", sans-serif; font-size: 40px; line-height: 50px; }
.purple { background: #9075d6; }
.gold { background: #f3c904; }
.lime { background: #74c41f; }
.total { margin-left: auto; padding-top: 10px; font: 500 50px/58px Roboto, "Noto Sans CJK KR", sans-serif; }
.when { justify-content: space-between; height: 48px; margin-top: 37px; font-size: 41px; line-height: 48px; }
.fare { display: flex; align-items: center; gap: 12px; color: #70757a; }
.ic { width: 59px; height: 48px; border: 3px solid #dadce0; border-radius: 10px; color: #5f6368; font: 700 40px/42px "Liberation Sans Narrow", Roboto, sans-serif; text-align: center; }
.note { gap: 12px; height: 40px; margin-top: 28px; color: #70757a; font-size: 34px; line-height: 40px; }

.home-bar { position: fixed; bottom: 24px; left: 50%; width: 417px; height: 15px; margin-left: -208px; border-radius: 8px; background: #000; }
```
